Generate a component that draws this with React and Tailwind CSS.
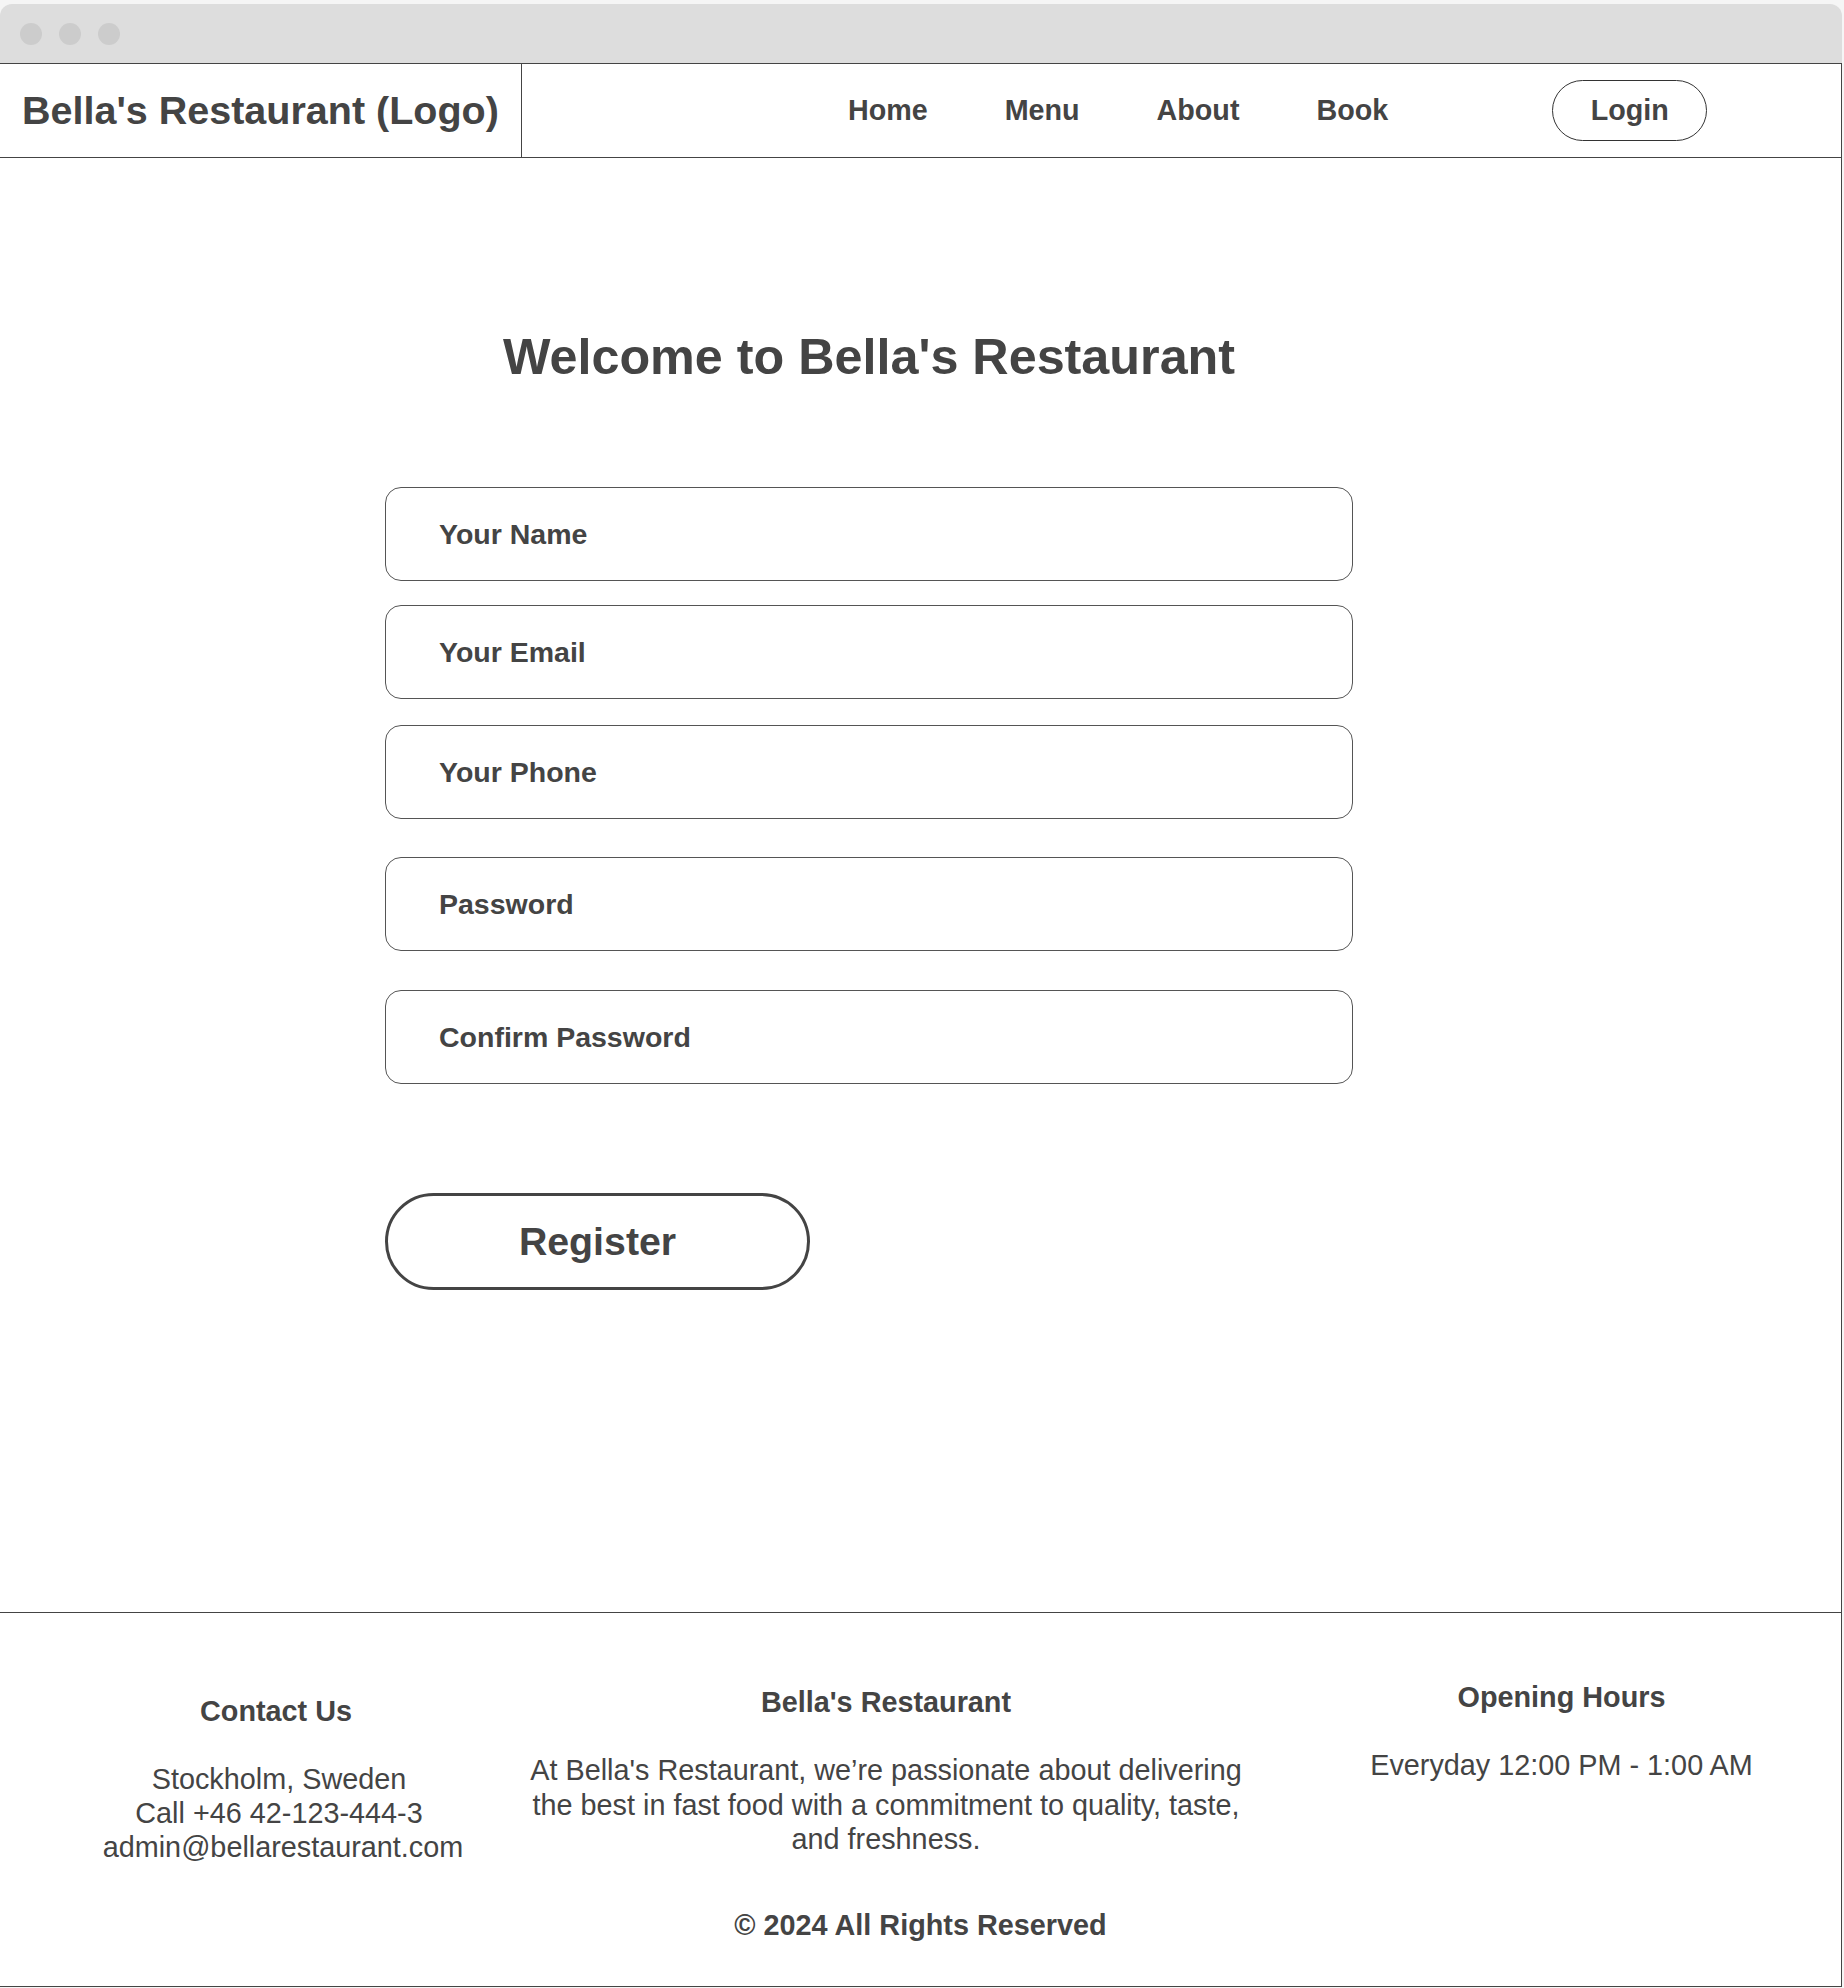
import React from 'react';

// Bella's Restaurant - register wireframe
const fields = [
  { label: 'Your Name', type: 'text', mt: 'mt-[100px]' },
  { label: 'Your Email', type: 'email', mt: 'mt-[24px]' },
  { label: 'Your Phone', type: 'tel', mt: 'mt-[26px]' },
  { label: 'Password', type: 'password', mt: 'mt-[38px]' },
  { label: 'Confirm Password', type: 'password', mt: 'mt-[39px]' },
];

const navLinks = ['Home', 'Menu', 'About', 'Book'];

const App = () => {
  return (
    <div className="min-h-screen bg-[#f5f5f5] text-[#444] font-['Liberation_Sans',Arial,sans-serif]">
      <div className="w-[1842px] pt-[4px]">
        {/* Browser chrome */}
        <div className="h-[59px] bg-[#dddddd] rounded-t-[12px] flex items-center pl-[20px] gap-[17px]">
          <span className="w-[22px] h-[22px] rounded-full bg-[#cccccc]" />
          <span className="w-[22px] h-[22px] rounded-full bg-[#cccccc]" />
          <span className="w-[22px] h-[22px] rounded-full bg-[#cccccc]" />
        </div>

        <div className="bg-white border-t border-r border-b border-[#444]">
          {/* Header */}
          <header className="h-[94px] flex items-center border-b border-[#444]">
            <div className="w-[522px] h-full flex items-center pl-[22px] border-r border-[#444]">
              <span className="text-[39.5px] font-bold leading-none">Bella's Restaurant (Logo)</span>
            </div>
            <nav className="flex items-center ml-[326px] gap-[77px]">
              {navLinks.map(link => (
                <a key={link} href="#" className="text-[28.7px] font-bold leading-none">{link}</a>
              ))}
            </nav>
            <button className="ml-[164px] w-[155px] h-[61px] rounded-full border border-[#333] text-[28.7px] font-bold">
              Login
            </button>
          </header>

          {/* Register form */}
          <main className="h-[1454px] pl-[385px] pt-[169px]">
            <div className="w-[968px] flex flex-col">
              <h1 className="text-[50.3px] font-bold leading-[60px] text-center">Welcome to Bella's Restaurant</h1>
              {fields.map(f => (
                <input
                  key={f.label}
                  type={f.type}
                  placeholder={f.label}
                  className={`${f.mt} h-[94px] w-full rounded-[16px] border border-[#555] pl-[53px] text-[28.5px] font-bold outline-none placeholder:text-[#444] placeholder:font-bold`}
                />
              ))}
              <button className="mt-[109px] w-[425px] h-[97px] rounded-full border-[3px] border-[#444] text-[39.3px] font-bold">
                Register
              </button>
            </div>
          </main>

          {/* Footer */}
          <footer className="border-t border-[#444]">
            <div className="flex items-start">
              <div className="w-[516px] pl-[36px] pt-[81px] text-center">
                <h3 className="text-[28.8px] font-bold leading-[34px]">Contact Us</h3>
                <div className="mt-[34px] pl-[6px] text-[28.8px] leading-[34px]">
                  <p>Stockholm, Sweden</p>
                  <p>Call +46 42-123-444-3</p>
                  <p className="pl-[8px]">admin@bellarestaurant.com</p>
                </div>
              </div>
              <div className="w-[740px] pt-[72px] text-center">
                <h3 className="text-[28.8px] font-bold leading-[34px]">Bella's Restaurant</h3>
                <p className="mt-[34px] text-[28.8px] leading-[34.5px]">
                  At Bella's Restaurant, we’re passionate about delivering the best in fast food with a commitment to quality, taste, and freshness.
                </p>
              </div>
              <div className="flex-1 pl-[26px] pt-[67px] text-center">
                <h3 className="text-[28.8px] font-bold leading-[34px]">Opening Hours</h3>
                <p className="mt-[34px] text-[28.8px] leading-[34px]">Everyday 12:00 PM - 1:00 AM</p>
              </div>
            </div>
            <p className="mt-[44px] pb-[44px] text-center text-[28.8px] font-bold leading-[34px]">© 2024 All Rights Reserved</p>
          </footer>
        </div>
      </div>
    </div>
  );
};

export default App;
